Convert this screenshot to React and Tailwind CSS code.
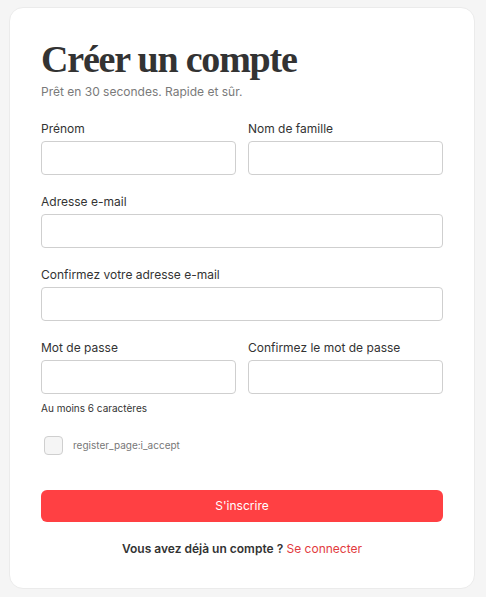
import React, { useState } from 'react';

const sans = { fontFamily: 'Inter, "Open Sans", sans-serif' };

const Field = ({ label, type = 'text', value, onChange }) => (
  <div className="flex flex-col">
    <label className="text-[12px] leading-[16px] text-[#333] mb-[4px]">{label}</label>
    <input
      type={type}
      value={value}
      onChange={onChange}
      className="h-[34px] w-full rounded-[4px] border border-[#cfcfcf] bg-white px-3 text-[12px] outline-none"
    />
  </div>
);

const App = () => {
  const [form, setForm] = useState({
    firstName: '',
    lastName: '',
    email: '',
    emailConfirm: '',
    password: '',
    passwordConfirm: '',
  });
  const [accept, setAccept] = useState(false);

  const set = (key) => (e) => setForm({ ...form, [key]: e.target.value });

  return (
    <div className="min-h-[597px] bg-[#f5f5f5] pl-[9px] pr-[11px] pt-[7px] pb-[8px]" style={sans}>
      <div className="rounded-[14px] border border-[#ebebeb] bg-white px-[31px] pt-[28px] pb-[31px]">
        <h1
          className="text-[38px] leading-[46px] font-bold tracking-[-1.2px] text-[#333]"
          style={{ fontFamily: '"Liberation Serif", "Times New Roman", serif' }}
        >
          Créer un compte
        </h1>
        <p className="mt-[2px] text-[12px] leading-[16px] text-[#7a7a7a]">Prêt en 30 secondes. Rapide et sûr.</p>

        <form onSubmit={(e) => e.preventDefault()} className="mt-[21px] flex flex-col">
          <div className="grid grid-cols-2 gap-x-[12px]">
            <Field label="Prénom" value={form.firstName} onChange={set('firstName')} />
            <Field label="Nom de famille" value={form.lastName} onChange={set('lastName')} />
          </div>
          <div className="mt-[19px]">
            <Field label="Adresse e-mail" type="email" value={form.email} onChange={set('email')} />
          </div>
          <div className="mt-[19px]">
            <Field label="Confirmez votre adresse e-mail" type="email" value={form.emailConfirm} onChange={set('emailConfirm')} />
          </div>
          <div className="mt-[19px] grid grid-cols-2 gap-x-[12px]">
            <Field label="Mot de passe" type="password" value={form.password} onChange={set('password')} />
            <Field label="Confirmez le mot de passe" type="password" value={form.passwordConfirm} onChange={set('passwordConfirm')} />
          </div>
          <p className="mt-[7px] text-[10px] leading-[14px] text-[#333]">Au moins 6 caractères</p>

          <label className="mt-[21px] ml-[3px] flex items-center gap-[10px] cursor-pointer">
            <input
              type="checkbox"
              checked={accept}
              onChange={(e) => setAccept(e.target.checked)}
              className="appearance-none h-[19px] w-[19px] rounded-[4px] border border-[#cfcfcf] bg-[#f5f5f5]"
            />
            <span className="text-[10px] text-[#777]">register_page:i_accept</span>
          </label>

          <button
            type="submit"
            className="mt-[35px] h-[32px] w-full rounded-[6px] bg-[#ff4043] text-[12px] text-white"
          >
            S'inscrire
          </button>
        </form>

        <p className="mt-[19px] text-center text-[12px] leading-[16px] text-[#333]">
          <span className="font-semibold">Vous avez déjà un compte ?</span>{' '}
          <a href="#" className="text-[#e23b40]">Se connecter</a>
        </p>
      </div>
    </div>
  );
};

export default App;
